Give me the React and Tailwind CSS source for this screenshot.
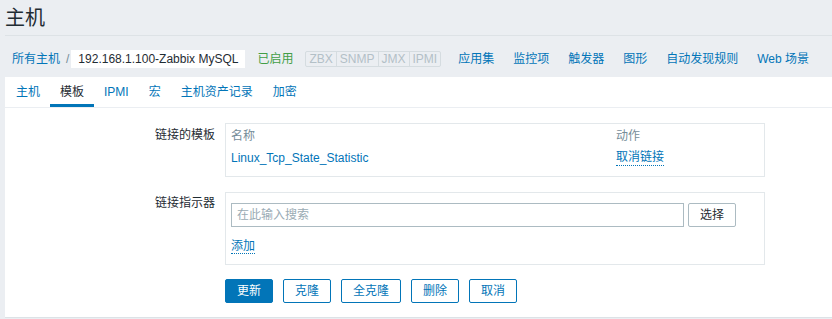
const FONT = { fontFamily: '"Liberation Sans", Arial, "Noto Sans CJK SC", sans-serif' };

const NAV = ["应用集", "监控项", "触发器", "图形", "自动发现规则", "Web 场景"];
const BADGES = ["ZBX", "SNMP", "JMX", "IPMI"];
const TABS = ["主机", "模板", "IPMI", "宏", "主机资产记录", "加密"];
const BUTTONS = ["克隆", "全克隆", "删除", "取消"];

export default function App() {
  return (
    <div style={FONT} className="w-[832px] h-[319px] overflow-hidden bg-[#ebeef2] pl-[5px] text-[12px] text-[#1f2c33]">
      {/* header */}
      <div className="h-[36px] border-b border-[#dde2e6] flex items-center">
        <h1 className="text-[20px] leading-[24px] font-normal text-[#1f2c33]">主机</h1>
      </div>

      {/* breadcrumbs + host nav */}
      <div className="h-[41px] flex items-center pt-[4px] pl-[7px]">
        <span className="text-[#0275b8]">所有主机</span>
        <span className="text-[#768d99] ml-[6px] mr-[2px]">/</span>
        <span className="bg-white h-[18px] px-[7px] flex items-center text-[#1f2c33]">192.168.1.100-Zabbix MySQL</span>
        <span className="ml-[12px] text-[#429e47]">已启用</span>
        <div className="ml-[12px] flex border border-[#d5dce0] rounded-[2px] h-[16px]">
          {BADGES.map((b, i) => (
            <span key={b} className={"px-[3px] flex items-center text-[#b3c0c7] leading-none " + (i > 0 ? "border-l border-[#d5dce0]" : "")}>{b}</span>
          ))}
        </div>
        <div className="ml-[17px] flex gap-[19px] text-[#0275b8]">
          {NAV.map((n) => <span key={n}>{n}</span>)}
        </div>
      </div>

      {/* main panel */}
      <div className="bg-white h-[241px] border-b border-[#dde2e6]">
        <div className="h-[31px] flex border-b border-[#ebeef2] pl-[1px]">
          {TABS.map((t) => (
            <div key={t} className={"px-[10px] flex items-center pt-[2px] border-b-[3px] " + (t === "模板" ? "border-[#0275b8] text-[#1f2c33]" : "border-transparent text-[#0275b8]")}>{t}</div>
          ))}
        </div>

        <div className="pt-[15px]">
          <div className="flex">
            <div className="w-[210px] text-right pt-[4px] leading-[16px]">链接的模板</div>
            <div className="ml-[10px] w-[540px] border border-[#e3e8eb] px-[5px] pt-[1px] pb-[7px]">
              <div className="h-[22px] flex items-center text-[#768d99]">
                <span className="w-[385px]">名称</span>
                <span>动作</span>
              </div>
              <div className="h-[22px] flex items-center text-[#0275b8]">
                <span className="w-[385px]">Linux_Tcp_State_Statistic</span>
                <span className="border-b border-dotted border-[#0275b8] leading-[15px]">取消链接</span>
              </div>
            </div>
          </div>

          <div className="flex mt-[15px]">
            <div className="w-[210px] text-right pt-[3px] leading-[16px]">链接指示器</div>
            <div className="ml-[10px] w-[540px] border border-[#e3e8eb] px-[5px] pt-[10px] pb-[10px]">
              <div className="flex gap-[4px]">
                <div className="w-[453px] h-[24px] border border-[#acbbc2] px-[5px] flex items-center text-[#9aabb4]">在此输入搜索</div>
                <button className="w-[48px] h-[24px] border border-[#acbbc2] rounded-[2px] bg-white text-[#1f2c33]">选择</button>
              </div>
              <div className="mt-[12px] leading-[15px]">
                <span className="text-[#0275b8] border-b border-dotted border-[#0275b8]">添加</span>
              </div>
            </div>
          </div>

          <div className="flex ml-[220px] mt-[14px] gap-[10px]">
            <button className="h-[24px] px-[11px] rounded-[2px] bg-[#0275b8] border border-[#0275b8] text-white">更新</button>
            {BUTTONS.map((b) => (
              <button key={b} className="h-[24px] px-[11px] rounded-[2px] bg-white border border-[#0275b8] text-[#0275b8]">{b}</button>
            ))}
          </div>
        </div>
      </div>
    </div>
  );
}
